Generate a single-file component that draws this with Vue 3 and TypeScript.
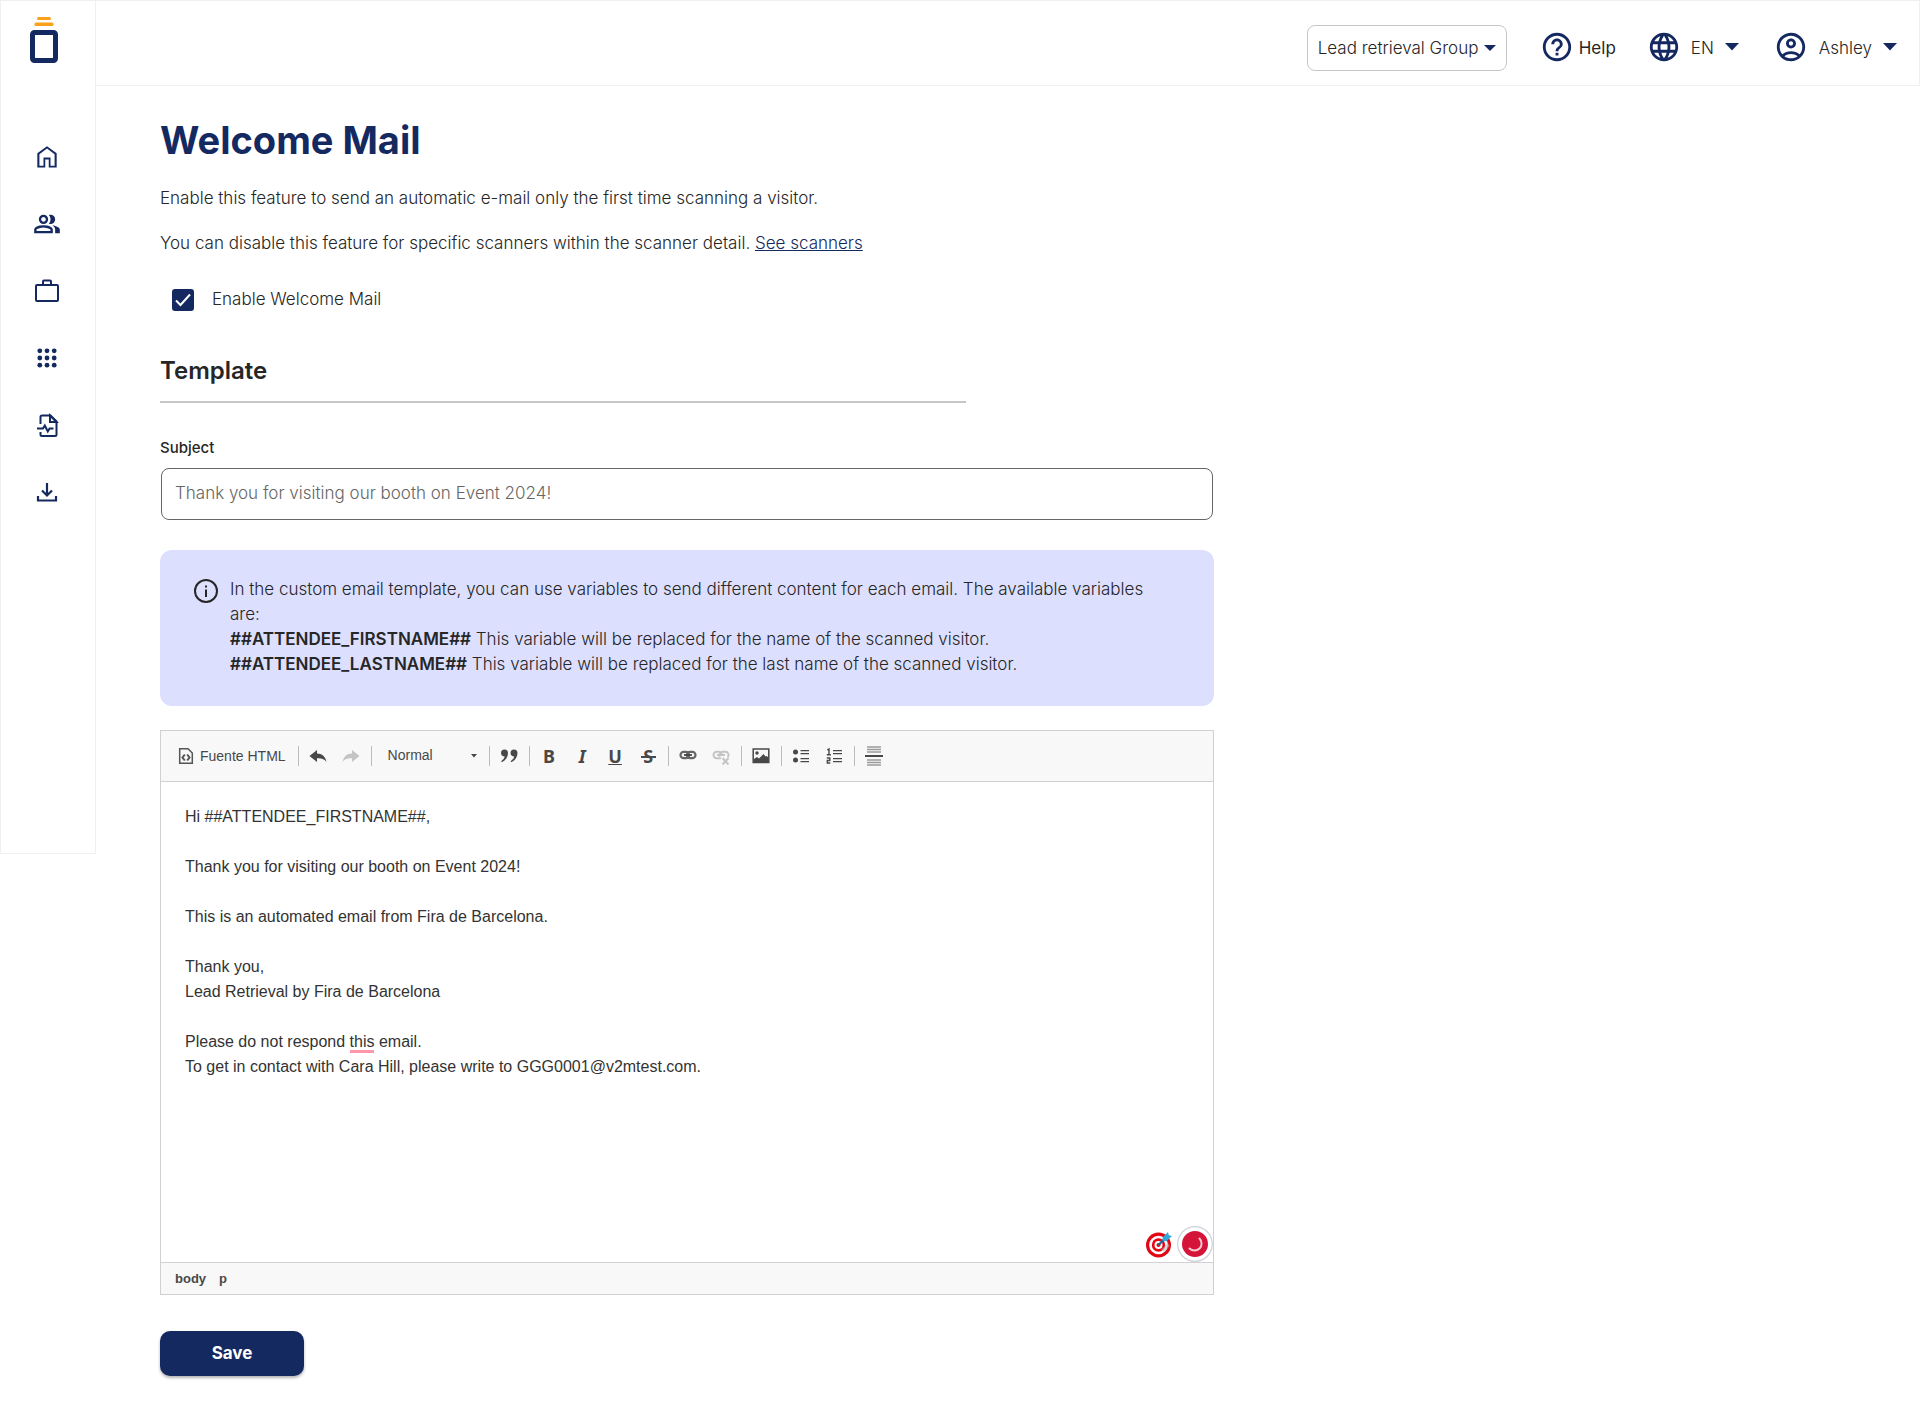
<script setup lang="ts">
import { ref } from 'vue'

const enabled = ref(true)
const subject = ref('')
const group = ref('Lead retrieval Group')
const language = ref('EN')
const format = ref('Normal')
</script>

<template>
  <div class="app">
    <aside class="sidebar">
      <a class="logo" href="#" aria-label="Dashboard">
        <svg width="28" height="46" viewBox="0 0 28 46">
          <rect x="7" y="0" width="14" height="3" rx="1.5" fill="#f9a11b" />
          <rect x="4.500" y="5.500" width="19" height="3.500" rx="1.500" fill="#f9a11b" />
          <rect x="2.500" y="15.500" width="23" height="28" rx="2" fill="none" stroke="#152961" stroke-width="5" />
        </svg>
      </a>
      <nav class="nav" aria-label="Main">
        <a href="#" aria-label="Home">
          <svg width="28" height="28" viewBox="0 0 24 24"><path fill="currentColor" d="M5.500 19.500h3.500v-7h6v7h3.500V9.600L12 4.700 5.500 9.600zM3.700 21V8.800L12 2.700l8.300 6.100V21h-6.800v-6.800h-3V21z" /></svg>
        </a>
        <a href="#" aria-label="Scanners">
          <svg width="28" height="28" viewBox="0 -960 960 960"><path fill="currentColor" d="M40-160v-112q0-34 17.500-62.500T104-378q62-31 126-46.500T360-440q66 0 130 15.500T616-378q29 15 46.500 43.500T680-272v112H40Zm720 0v-120q0-44-24.500-84.500T666-434q51 6 96 20.500t84 35.500q36 20 55 44.500t19 53.500v120H760ZM360-480q-66 0-113-47t-47-113q0-66 47-113t113-47q66 0 113 47t47 113q0 66-47 113t-113 47Zm400-160q0 66-47 113t-113 47q-11 0-28-2.500t-28-5.500q27-32 41.500-71t14.500-81q0-42-14.500-81T544-792q14-5 28-6.500t28-1.500q66 0 113 47t47 113ZM120-240h480v-32q0-11-5.500-20T580-306q-54-27-109-40.500T360-360q-56 0-111 13.500T140-306q-9 5-14.500 14t-5.500 20v32Zm240-320q33 0 56.500-23.500T440-640q0-33-23.500-56.500T360-720q-33 0-56.500 23.500T280-640q0 33 23.500 56.500T360-560Z" /></svg>
        </a>
        <a href="#" aria-label="Company">
          <svg width="28" height="28" viewBox="0 0 28 28" fill="none" stroke="currentColor" stroke-width="2"><rect x="3" y="8" width="22" height="16" rx="1" /><path d="M10 8V4.500q0-1 1-1h6q1 0 1 1V8" /></svg>
        </a>
        <a href="#" aria-label="Products">
          <svg width="28" height="28" viewBox="0 0 28 28" fill="currentColor">
            <template v-for="y in 3" :key="y">
              <circle v-for="x in 3" :key="x" :cx="x * 7.2 - 0.4" :cy="y * 7.2 - 0.4" r="2.400" />
            </template>
          </svg>
        </a>
        <a href="#" aria-label="Reports">
          <svg width="28" height="28" viewBox="0 0 28 28" fill="none" stroke="currentColor" stroke-width="2">
            <path d="M7.500 13V6q0-1.500 1.500-1.500h8.500L23.500 10.500V23.500q0 1.500-1.500 1.500H9q-1.500 0-1.500-1.500V21" />
            <path d="M17 4.500V11h6.500z" fill="#fff" />
            <path d="M4 17.500h6l1.800-3 3 6 1.800-3H20.500" />
          </svg>
        </a>
        <a href="#" aria-label="Downloads">
          <svg width="28" height="28" viewBox="0 0 28 28" fill="none" stroke="currentColor" stroke-width="2.200"><path d="M14 5v12M9 12.500l5 5 5-5M5 18v4.500h18V18" /></svg>
        </a>
      </nav>
    </aside>

    <div class="page">
      <header class="topbar">
        <label class="group">
          <select v-model="group" aria-label="Group"><option>Lead retrieval Group</option></select>
          <svg width="12" height="6" viewBox="0 0 12 6"><path d="M0 0h12L6 6z" fill="#152961" /></svg>
        </label>
        <a class="help" href="#">
          <svg width="34" height="34" viewBox="0 0 24 24"><path fill="#152961" d="M11 18h2v-2h-2v2zm1-16C6.480 2 2 6.480 2 12s4.480 10 10 10 10-4.480 10-10S17.520 2 12 2zm0 18c-4.410 0-8-3.590-8-8s3.590-8 8-8 8 3.590 8 8-3.590 8-8 8zm0-14c-2.210 0-4 1.790-4 4h2c0-1.100.9-2 2-2s2 .9 2 2c0 2-3 1.750-3 5h2c0-2.250 3-2.500 3-5 0-2.210-1.790-4-4-4z" /></svg>
          <span>Help</span>
        </a>
        <label class="menu language">
          <svg width="34" height="34" viewBox="0 0 24 24"><path fill="#152961" d="M11.990 2C6.470 2 2 6.480 2 12s4.470 10 9.990 10C17.520 22 22 17.520 22 12S17.520 2 11.990 2zm6.930 6h-2.950c-.32-1.250-.78-2.450-1.380-3.560 1.840.63 3.370 1.910 4.330 3.560zM12 4.040c.83 1.200 1.480 2.530 1.910 3.960h-3.820c.43-1.430 1.080-2.760 1.910-3.960zM4.260 14C4.100 13.360 4 12.690 4 12s.1-1.360.26-2h3.380c-.08.66-.14 1.320-.14 2 0 .68.06 1.340.14 2H4.260zm.82 2h2.950c.32 1.250.78 2.450 1.380 3.560-1.840-.63-3.370-1.900-4.330-3.560zm2.950-8H5.080c.96-1.660 2.490-2.930 4.330-3.560C8.810 5.550 8.350 6.750 8.030 8zM12 19.960c-.83-1.200-1.480-2.530-1.910-3.960h3.820c-.43 1.430-1.080 2.760-1.910 3.960zM14.340 14H9.660c-.09-.66-.16-1.320-.16-2 0-.68.07-1.350.16-2h4.680c.09.65.16 1.320.16 2 0 .68-.07 1.340-.16 2zm.25 5.560c.6-1.110 1.060-2.310 1.380-3.560h2.950c-.96 1.650-2.490 2.930-4.330 3.560zM16.360 14c.08-.66.14-1.320.14-2 0-.68-.06-1.340-.14-2h3.380c.16.64.26 1.310.26 2s-.1 1.360-.26 2h-3.380z" /></svg>
          <select v-model="language" aria-label="Language"><option>EN</option></select>
          <svg width="14" height="8" viewBox="0 0 14 8"><path d="M0 0h14L7 7.500z" fill="#152961" /></svg>
        </label>
        <button class="menu account" type="button">
          <svg width="34" height="34" viewBox="0 0 24 24"><path fill="#152961" d="M12 2C6.480 2 2 6.480 2 12s4.480 10 10 10 10-4.480 10-10S17.520 2 12 2zM7.350 18.500C8.660 17.560 10.260 17 12 17s3.340.56 4.650 1.500C15.340 19.440 13.740 20 12 20s-3.340-.56-4.650-1.500zm10.790-1.380C16.450 15.800 14.320 15 12 15s-4.450.8-6.140 2.120C4.700 15.730 4 13.950 4 12c0-4.420 3.580-8 8-8s8 3.580 8 8c0 1.950-.7 3.730-1.860 5.120zM12 6c-1.930 0-3.500 1.570-3.500 3.500S10.070 13 12 13s3.500-1.570 3.500-3.500S13.930 6 12 6zm0 5c-.83 0-1.500-.67-1.500-1.500S11.170 8 12 8s1.500.67 1.500 1.500S12.830 11 12 11z" /></svg>
          <span>Ashley</span>
          <svg width="14" height="8" viewBox="0 0 14 8"><path d="M0 0h14L7 7.500z" fill="#152961" /></svg>
        </button>
      </header>

      <main class="content">
        <h1>Welcome Mail</h1>
        <p>Enable this feature to send an automatic e-mail only the first time scanning a visitor.</p>
        <p>You can disable this feature for specific scanners within the scanner detail. <a href="#">See scanners</a></p>
        <label class="enable">
          <input v-model="enabled" type="checkbox" />
          <span>Enable Welcome Mail</span>
        </label>

        <h2>Template</h2>

        <label class="field-label" for="subject">Subject</label>
        <input id="subject" v-model="subject" class="subject" type="text" placeholder="Thank you for visiting our booth on Event 2024!" />

        <section class="info">
          <svg width="24" height="24" viewBox="0 0 24 24"><circle cx="12" cy="12" r="11" fill="none" stroke="#262626" stroke-width="2" /><path d="M11 10.500h2V18h-2zM11 6.500h2v2h-2z" fill="#262626" /></svg>
          <div>
            In the custom email template, you can use variables to send different content for each email. The available variables are:<br />
            <strong>##ATTENDEE_FIRSTNAME##</strong> This variable will be replaced for the name of the scanned visitor.<br />
            <strong>##ATTENDEE_LASTNAME##</strong> This variable will be replaced for the last name of the scanned visitor.
          </div>
        </section>

        <section class="editor">
          <div class="toolbar" role="toolbar" aria-label="Editor toolbar">
            <button class="source" type="button">
              <svg width="16" height="18" viewBox="0 0 16 18" fill="none" stroke="#555" stroke-width="1.500"><path d="M1.700 1.700H10L14.300 6V16.300H1.700z" /><path d="M6.800 7.500L4.500 10.500l2.300 3M9.200 7.500l2.300 3-2.300 3" stroke-width="2" /></svg>
              <span>Fuente HTML</span>
            </button>
            <i class="sep"></i>
            <button type="button" aria-label="Undo"><svg width="18" height="18" viewBox="0 0 18 18"><path d="M.5 9L8 3v3.400c5 .1 8.600 3 9.500 8.600-2-3-5-4-9.500-3.700V15z" fill="#484848" /></svg></button>
            <button type="button" aria-label="Redo" disabled><svg width="18" height="18" viewBox="0 0 18 18"><path d="M17.500 9L10 3v3.400C5 6.500 1.400 9.400.5 15c2-3 5-4 9.500-3.700V15z" fill="#c4c4c4" /></svg></button>
            <i class="sep"></i>
            <label class="format">
              <select v-model="format" aria-label="Paragraph format"><option>Normal</option></select>
              <svg width="6" height="4" viewBox="0 0 6 4"><path d="M0 0h6L3 3.500z" fill="#484848" /></svg>
            </label>
            <i class="sep"></i>
            <button type="button" aria-label="Block quote"><svg width="18" height="18" viewBox="0 0 18 18" fill="#484848"><path d="M1 6a3.400 3.400 0 0 1 7 0c0 4-2 7-6.200 9.200l-.6-1C3.500 12.500 4.500 11 4.700 9.600 2.500 9.600 1 8 1 6z" /><path d="M10.500 6a3.400 3.400 0 0 1 7 0c0 4-2 7-6.200 9.200l-.6-1c2.300-1.700 3.300-3.200 3.500-4.600-2.200 0-3.700-1.600-3.700-3.600z" /></svg></button>
            <i class="sep"></i>
            <button class="glyph" type="button" aria-label="Bold">B</button>
            <button class="glyph italic" type="button" aria-label="Italic">I</button>
            <button class="glyph under" type="button" aria-label="Underline">U</button>
            <button class="glyph strike" type="button" aria-label="Strikethrough">S</button>
            <i class="sep"></i>
            <button type="button" aria-label="Link"><svg width="18" height="18" viewBox="0 0 18 18" fill="none" stroke="#666"><rect x="1.500" y="4.800" width="8.600" height="6.400" rx="3.200" stroke-width="2.200" /><rect x="7.900" y="4.800" width="8.600" height="6.400" rx="3.200" stroke-width="2.200" /><path d="M5 8h8" stroke="#484848" stroke-width="1.800" /></svg></button>
            <button type="button" aria-label="Unlink" disabled><svg width="18" height="18" viewBox="0 0 18 18" fill="none" stroke="#c4c4c4"><path d="M9 11.200H4.700a3.200 3.200 0 0 1 0-6.400h2.200a3.200 3.200 0 0 1 3 2M8 9.500a3.200 3.200 0 0 1 3-4.700h2.300a3.200 3.200 0 0 1 2.500 5.200M5 8h8" stroke-width="2" /><path d="M10.500 11l6 6.500M16.500 11l-6 6.500" stroke-width="2" /></svg></button>
            <i class="sep"></i>
            <button type="button" aria-label="Image"><svg width="18" height="18" viewBox="0 0 18 18"><path d="M1.200 2h15.600v13.500H1.200z" fill="none" stroke="#484848" stroke-width="1.500" /><circle cx="5" cy="6" r="1.700" fill="#484848" /><path d="M2 15v-3l3-2 2 1.500L11.500 7l2 2.500L15 9l1.500 2v4z" fill="#484848" /></svg></button>
            <i class="sep"></i>
            <button type="button" aria-label="Bulleted list"><svg width="18" height="18" viewBox="0 0 18 18" fill="#484848"><circle cx="3.500" cy="5" r="2.500" /><circle cx="3.500" cy="13" r="2.500" /><path d="M8.500 3h8.500v1.300H8.500zM8.500 6h8.500v1.300H8.500zM8.500 11h8.500v1.300H8.500zM8.500 14h8.500v1.300H8.500z" /></svg></button>
            <button type="button" aria-label="Numbered list"><svg width="18" height="18" viewBox="0 0 18 18" fill="#484848"><path d="M2.200 3L4 2v6M1.800 7.800h4.100M1.800 11h3v2.500H2.300v2.500h3" fill="none" stroke="#484848" stroke-width="1.400" /><path d="M8 3h9v1.300H8zM8 6h9v1.300H8zM8 11h9v1.300H8zM8 14h9v1.300H8z" /></svg></button>
            <i class="sep"></i>
            <button type="button" aria-label="Horizontal line"><svg width="18" height="20" viewBox="0 0 18 20"><path d="M2 1h14M2 3.500h14M2 6h14M2 14h14M2 16.500h14M2 19h14" stroke="#9a9a9a" stroke-width="1.500" /><path d="M0 10h18" stroke="#484848" stroke-width="2" /></svg></button>
          </div>

          <div class="mail" contenteditable="true" spellcheck="false" role="textbox" aria-label="Mail body">
            <p>Hi ##ATTENDEE_FIRSTNAME##,</p>
            <p>Thank you for visiting our booth on Event 2024!</p>
            <p>This is an automated email from Fira de Barcelona.</p>
            <p>Thank you,<br />Lead Retrieval by Fira de Barcelona</p>
            <p>Please do not respond <span class="typo">this</span> email.<br />To get in contact with Cara Hill, please write to GGG0001@v2mtest.com.</p>
          </div>

          <div class="assist">
            <svg width="26" height="28" viewBox="0 0 26 28">
              <circle cx="12.500" cy="15" r="12.500" fill="#e30613" />
              <circle cx="12.500" cy="15" r="9.300" fill="#fff" />
              <circle cx="12.500" cy="15" r="6.700" fill="#e30613" />
              <circle cx="12.500" cy="15" r="4" fill="#fff" />
              <circle cx="12.500" cy="15" r="2" fill="#e30613" />
              <path d="M15 20l7-7 1.500 3-5 6z" fill="#bbb" opacity=".6" />
              <path d="M12.500 15L19 8.500" stroke="#1b6d98" stroke-width="2.400" />
              <path d="M16.500 7.500L22 2l.8 3.200L26 6l-5.500 5.300-3.500-.3z" fill="#2fa9dc" />
            </svg>
            <svg width="36" height="36" viewBox="0 0 36 36">
              <circle cx="18" cy="18" r="17.300" fill="#fff" stroke="#cfd1dc" stroke-width="1.200" />
              <circle cx="18" cy="18" r="13" fill="#d5143a" />
              <path d="M22.500 12.500a7 7 0 0 1-10 10" fill="none" stroke="#f7c9d1" stroke-width="2" stroke-linecap="round" />
            </svg>
          </div>

          <div class="path"><span>body</span><span>p</span></div>
        </section>

        <button class="save" type="button">Save</button>
      </main>
    </div>
  </div>
</template>

<style>
body {
  background: #fff;
}
</style>

<style scoped>
.app {
  display: flex;
  align-items: flex-start;
  color: #262626;
  font: 300 17px/25px Inter, sans-serif;
}
.app * {
  box-sizing: border-box;
}
svg {
  display: block;
  flex: none;
}
button,
select,
input {
  font: inherit;
  color: inherit;
}
button,
select {
  appearance: none;
  padding: 0;
  border: 0;
  background: none;
}
.sidebar {
  flex: none;
  width: 96px;
  padding: 16px 0 347px;
  border: 1px solid #f0f0f0;
}
.logo {
  display: block;
  padding-left: 29px;
}
.nav {
  display: flex;
  flex-direction: column;
  align-items: center;
  gap: 39px;
  padding: 80px 2px 0 0;
}
.nav a {
  color: #152961;
}
.page {
  flex: 1;
  min-width: 0;
}
.topbar {
  display: flex;
  align-items: center;
  justify-content: flex-end;
  height: 86px;
  padding: 0 22px 0 0;
  border: 1px solid #f0f0f0;
  border-left: 0;
}
.group {
  display: flex;
  align-items: center;
  gap: 5px;
  height: 46px;
  margin: 10px 33px 0 0;
  padding: 0 10px;
  border: 1px solid #c6c6c6;
  border-radius: 8px;
}
.help,
.menu {
  display: flex;
  align-items: center;
  margin-top: 8px;
}
.help span,
.menu span,
.menu select {
  padding-top: 2px;
}
.help {
  gap: 5px;
  margin-right: 31px;
  color: inherit;
  font-weight: 400;
  text-decoration: none;
}
.language {
  gap: 10px;
  margin-right: 35px;
}
.account {
  gap: 11px;
}
.content {
  display: flex;
  flex-direction: column;
  align-items: flex-start;
  max-width: 1118px;
  padding: 29px 0 32px 64px;
}
h1 {
  margin: 0 0 21px;
  color: #152961;
  font-size: 38px;
  line-height: 50px;
  font-weight: 700;
}
p {
  margin: 0 0 20px;
}
.content a {
  color: #152961;
}
.enable {
  display: flex;
  align-items: center;
  gap: 18px;
  margin: 11px 0 0 12px;
}
.enable input {
  appearance: none;
  width: 22px;
  height: 22px;
  margin: 0;
  border: 2px solid #152961;
  border-radius: 3px;
}
.enable input:checked {
  background: #152961 url("data:image/svg+xml,%3Csvg xmlns='http://www.w3.org/2000/svg' viewBox='0 0 18 18'%3E%3Cpath d='M2 9.500l4.500 4.500L16 3.500' fill='none' stroke='%23fff' stroke-width='2'/%3E%3C/svg%3E") center / 18px 18px no-repeat;
}
h2 {
  width: 806px;
  max-width: 100%;
  margin: 43px 0 32px;
  padding-bottom: 14px;
  border-bottom: 2px solid #c6c6c6;
  font-size: 24px;
  line-height: 32px;
  font-weight: 600;
}
.field-label {
  font-size: 15px;
  font-weight: 500;
}
.subject {
  width: calc(100% - 2px);
  height: 52px;
  margin: 8px 1px 30px;
  padding: 0 13px 2px;
  border: 1px solid #666;
  border-radius: 8px;
  background: #fff;
}
.subject::placeholder {
  color: #666;
  opacity: 1;
}
.info {
  display: flex;
  gap: 12px;
  width: 100%;
  margin-bottom: 24px;
  padding: 27px 50px 29px 34px;
  border-radius: 12px;
  background: #dddfff;
}
.info svg {
  margin-top: 2px;
}
.info strong {
  font-weight: 600;
}
.editor {
  position: relative;
  width: 100%;
  border: 1px solid #d1d1d1;
  font-family: "Liberation Sans", Arial, sans-serif;
  font-weight: 400;
}
.toolbar {
  display: flex;
  align-items: center;
  height: 51px;
  padding-left: 10px;
  border-bottom: 1px solid #d1d1d1;
  background: #f8f8f8;
  color: #484848;
  font-size: 14px;
}
.toolbar button {
  display: flex;
  align-items: center;
  justify-content: center;
  width: 33px;
  height: 33px;
}
.toolbar .source {
  gap: 6px;
  width: auto;
  padding: 0 9px 0 7px;
}
.sep {
  flex: none;
  width: 1px;
  height: 20px;
  margin: 0 3px;
  background: #bcbcbc;
}
.format {
  display: flex;
  align-items: center;
  justify-content: space-between;
  width: 111px;
  padding: 0 9px 0 13px;
}
.format select {
  padding-bottom: 2px;
}
.toolbar .glyph {
  position: relative;
  font: 700 18px/24px "Noto Sans", sans-serif;
}
.toolbar .italic {
  font-style: italic;
}
.toolbar .under {
  text-decoration: underline;
}
.strike::after {
  content: "";
  position: absolute;
  top: 16px;
  left: 9px;
  width: 15px;
  height: 2px;
  background: #484848;
}
.mail {
  min-height: 480px;
  padding: 22px 24px;
  outline: 0;
  color: #333;
  font-size: 16px;
}
.mail p {
  margin: 0 0 25px;
}
.typo {
  border-bottom: 3px solid #ff96aa;
}
.assist {
  position: absolute;
  right: 0;
  bottom: 32px;
  display: flex;
  align-items: center;
  gap: 5px;
}
.path {
  display: flex;
  gap: 13px;
  height: 32px;
  padding: 3px 14px;
  border-top: 1px solid #d1d1d1;
  background: #f8f8f8;
  color: #484848;
  font-size: 13px;
  font-weight: 700;
}
.save {
  width: 144px;
  height: 45px;
  margin-top: 36px;
  border-radius: 10px;
  background: #152961;
  box-shadow: 0 2px 3px rgba(0, 0, 0, 0.3);
  color: #fff;
  font-weight: 700;
}
</style>
